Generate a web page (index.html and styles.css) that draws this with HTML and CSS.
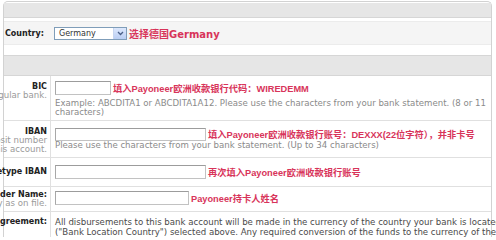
FILE: index.html
```html
<!DOCTYPE html>
<html>
<head>
<meta charset="utf-8">
<link rel="stylesheet" href="styles.css">
</head>
<body>
<div class="panel">
  <div class="bar"></div>
  <div class="country-row">
    <span class="country-label">Country:</span>
    <div class="fake-select">
      <span class="sel-text">Germany</span>
      <span class="sel-btn"><svg width="7" height="5" viewBox="0 0 7 5"><path d="M1 1 L3.5 3.5 L6 1" fill="none" stroke="#4a5f87" stroke-width="1.3"/></svg></span>
    </div>
    <span class="note note-lg">选择德国Germany</span>
  </div>
  <div class="spacer"></div>
  <div class="bar bar-2"></div>

  <div class="form-row row-bic">
    <div class="label"><b>BIC</b><span class="sub">Code of your regular bank.</span></div>
    <div class="field">
      <div class="line"><input class="inp w-bic" type="text"><span class="note">填入Payoneer欧洲收款银行代码：WIREDEMM</span></div>
      <div class="help">Example: ABCDITA1 or ABCDITA1A12. Please use the characters from your bank statement. (8 or 11<br>characters)</div>
    </div>
  </div>

  <div class="form-row row-iban">
    <div class="label"><b>IBAN</b><span class="sub">Account deposit number</span><span class="sub">for this account.</span></div>
    <div class="field">
      <div class="line"><input class="inp w-iban" type="text"><span class="note">填入Payoneer欧洲收款银行账号：DEXXX(22位字符），并非卡号</span></div>
      <div class="help">Please use the characters from your bank statement. (Up to 34 characters)</div>
    </div>
  </div>

  <div class="form-row row-retype">
    <div class="label"><b>Retype IBAN</b></div>
    <div class="field">
      <div class="line"><input class="inp w-iban" type="text"><span class="note">再次填入Payoneer欧洲收款银行账号</span></div>
    </div>
  </div>

  <div class="form-row row-holder">
    <div class="label"><b>Account Holder Name:</b><span class="sub">Exactly as on file.</span></div>
    <div class="field">
      <div class="line"><input class="inp w-holder" type="text"><span class="note">Payoneer持卡人姓名</span></div>
    </div>
  </div>

  <div class="form-row row-agree">
    <div class="label"><b>Agreement:</b></div>
    <div class="field agree">
      <span class="agree-line">All disbursements to this bank account will be made in the currency of the country your bank is located in</span>
      <span class="agree-line">("Bank Location Country") selected above. Any required conversion of the funds to the currency of the country</span>
    </div>
  </div>
</div>
</body>
</html>
```
FILE: styles.css
```css
html, body {
  margin: 0;
  padding: 0;
  background: #fff;
  overflow: hidden;
}

body {
  width: 496px;
  height: 237px;
  font-family: "DejaVu Sans", "Noto Sans CJK SC", sans-serif;
  font-size: 8px;
  color: #444;
}

.panel {
  margin: 1px 4px 0 3px;
  border: 1px solid #d2d2d2;
  border-bottom: none;
  border-radius: 5px 5px 0 0;
  height: 260px;
}

.bar {
  height: 14px;
  margin-top: 1px;
  background: #e6e6e6;
  border-bottom: 1px solid #d6d6d6;
}

.country-row {
  margin-top: 3px;
  height: 22px;
  background: #f5f5f5;
  border-top: 1px solid #ececec;
  border-bottom: 1px solid #ececec;
  display: flex;
  align-items: center;
  padding-left: 1px;
  white-space: nowrap;
}

.country-label {
  font-weight: bold;
  color: #222;
  width: 49px;
}

.fake-select {
  box-sizing: border-box;
  width: 73px;
  height: 13px;
  border: 1px solid #7f9db9;
  background: #fff;
  display: flex;
}

.sel-text {
  flex: 1;
  padding-left: 4px;
  line-height: 11px;
  color: #333;
}

.sel-btn {
  width: 12px;
  background: linear-gradient(#dde8fc, #b9cdf3);
  border-left: 1px solid #c6d5f0;
  display: flex;
  align-items: center;
  justify-content: center;
}

.note {
  font-family: "Liberation Sans", "Noto Sans CJK SC", sans-serif;
  font-weight: bold;
  font-size: 9.25px;
  color: #d8345a;
  margin-left: 2px;
}

.note-lg {
  font-family: "DejaVu Sans", "Noto Sans CJK SC", sans-serif;
  font-size: 10px;
}

.spacer {
  height: 10px;
}

.bar-2 {
  margin-top: 0;
  height: 19px;
  border-top: 1px solid #d6d6d6;
}

.form-row {
  display: grid;
  grid-template-columns: 47px 1fr;
  border-bottom: 1px solid #e0e0e0;
}

.label {
  box-sizing: border-box;
  border-right: 1px solid #e0e0e0;
  display: flex;
  flex-direction: column;
  align-items: flex-end;
  padding-right: 3px;
  line-height: 9px;
  white-space: nowrap;
}

.label b {
  color: #222;
}

.sub {
  color: #9a9a9a;
  font-size: 8.6px;
}

.field {
  padding-left: 4px;
  min-width: 0;
}

.line {
  display: flex;
  align-items: center;
  white-space: nowrap;
}

.inp {
  box-sizing: border-box;
  height: 14px;
  margin: 0;
  padding: 0;
  border: 1px solid #c2c2c2;
  border-top-color: #9c9c9c;
  border-left-color: #a8a8a8;
  background: #fff;
  flex: none;
}

.w-bic { width: 56px; }
.w-iban { width: 151px; }
.w-holder { width: 134px; }

.help {
  color: #8a8a8a;
  font-size: 8.6px;
  line-height: 9px;
  white-space: nowrap;
}

.row-bic .label { padding-top: 6px; }
.row-bic .field { padding-top: 5px; padding-bottom: 3px; }
.row-bic .help { margin-top: 4px; }

.row-iban .label { padding-top: 6px; }
.row-iban .field { padding-top: 6px; padding-bottom: 7px; }
.row-iban .inp { height: 13px; }

.row-retype .label { padding-top: 9px; }
.row-retype .field { padding-top: 7px; padding-bottom: 7px; }

.row-holder .label { padding-top: 3px; }
.row-holder .field { padding-top: 4px; padding-bottom: 6px; }

.row-agree .label { padding-top: 5px; line-height: 10px; }
.agree {
  padding-top: 5px;
  line-height: 10px;
  font-size: 8.6px;
  color: #4a4a4a;
}

.agree-line {
  display: block;
  white-space: nowrap;
}
```
